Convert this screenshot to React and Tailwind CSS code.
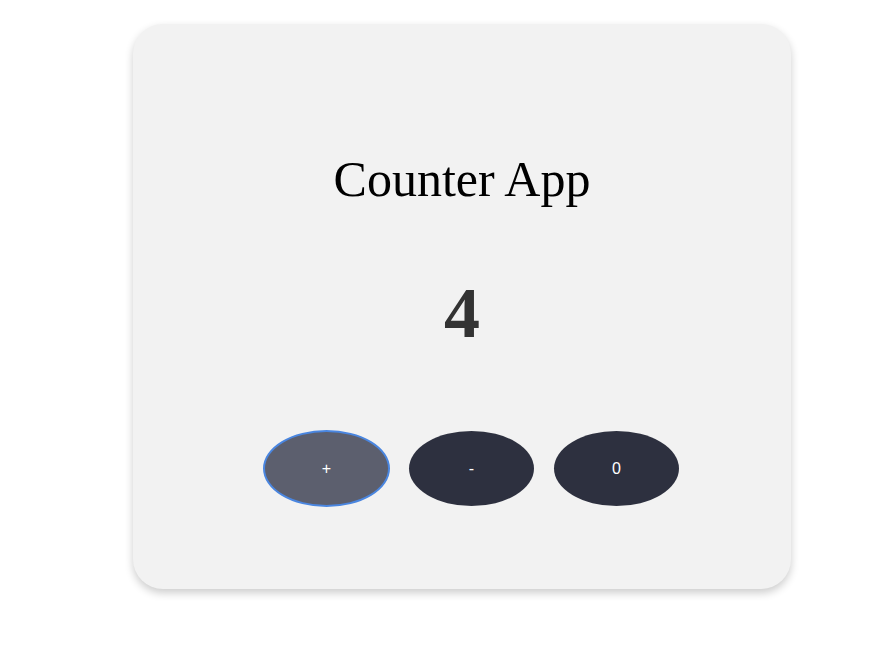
import { useState } from "react";

const App = () => {
  const [count, setCount] = useState(4);

  return (
    <div className="min-h-screen bg-white pt-[24px]">
      <div
        className="ml-[133px] w-[658px] h-[565px] bg-[#f2f2f2] rounded-[30px] shadow-[0_4px_8px_rgba(0,0,0,0.2)] pt-[128px] flex flex-col items-center"
        style={{ fontFamily: '"Liberation Serif", "Times New Roman", serif' }}
      >
        <h1 className="text-[50px] leading-[55px] text-black">Counter App</h1>
        <div className="mt-[66px] text-[72px] leading-[80px] font-bold text-[#333]">
          {count}
        </div>
        <div
          className="mt-[78px] flex gap-[20px] pl-[19px]"
          style={{ fontFamily: '"Liberation Sans", Arial, sans-serif' }}
        >
          <button
            onClick={() => setCount(count + 1)}
            className="w-[125px] h-[75px] rounded-[50%] bg-[#5c5f6e] text-white text-[16px] font-medium outline-2 outline-offset-[-1px] outline-[#4a86e0]"
          >
            +
          </button>
          <button
            onClick={() => setCount(count - 1)}
            className="w-[125px] h-[75px] rounded-[50%] bg-[#2d303f] text-white text-[16px] font-medium"
          >
            -
          </button>
          <button
            onClick={() => setCount(0)}
            className="w-[125px] h-[75px] rounded-[50%] bg-[#2d303f] text-white text-[16px] font-medium"
          >
            0
          </button>
        </div>
      </div>
    </div>
  );
};

export default App;
